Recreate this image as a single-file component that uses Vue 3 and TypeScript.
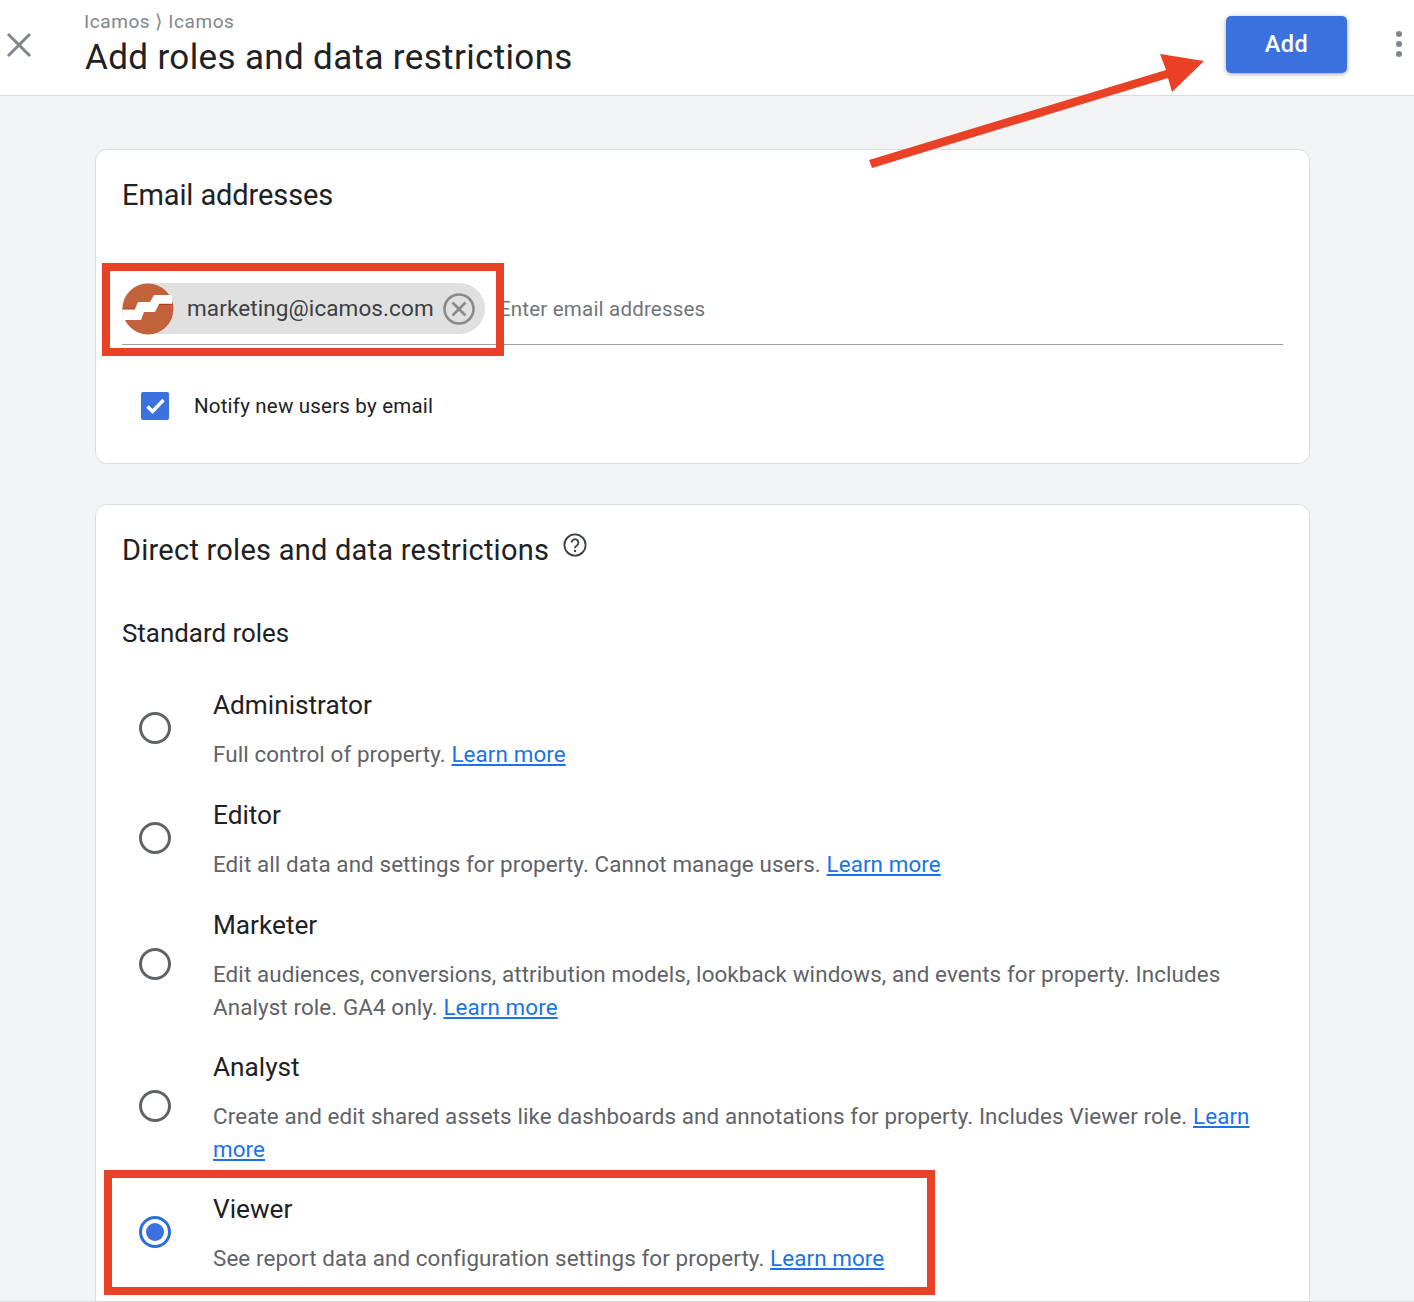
<script setup lang="ts">
interface Role {
  name: string
  desc: string
  selected?: boolean
}

const roles: Role[] = [
  { name: 'Administrator', desc: 'Full control of property.' },
  { name: 'Editor', desc: 'Edit all data and settings for property. Cannot manage users.' },
  { name: 'Marketer', desc: 'Edit audiences, conversions, attribution models, lookback windows, and events for property. Includes Analyst role. GA4 only.' },
  { name: 'Analyst', desc: 'Create and edit shared assets like dashboards and annotations for property. Includes Viewer role.' },
  { name: 'Viewer', desc: 'See report data and configuration settings for property.', selected: true },
]
</script>

<template>
  <div class="page">
    <header class="topbar">
      <button class="close" aria-label="Close">
        <svg width="26" height="26" viewBox="0 0 26 26"><path d="M2 2 L24 24 M24 2 L2 24" stroke="#80868b" stroke-width="3" fill="none" /></svg>
      </button>
      <div class="heading">
        <div class="crumb">Icamos ⟩ Icamos</div>
        <h1 class="title">Add roles and data restrictions</h1>
      </div>
      <button class="add">Add</button>
      <div class="more"><i></i><i></i><i></i></div>
    </header>

    <main class="content">
      <section class="card email-card">
        <h2 class="card-title email-title">Email addresses</h2>
        <div class="input-line">
          <div class="chip">
            <svg class="avatar" viewBox="0 0 52 52" width="52" height="52">
              <circle cx="26" cy="26" r="25.5" fill="#c1623a" />
              <path d="M0 26 H13 L16 19 H28 L32 12 H50 V21 H37 L33 29 H22 L19 37 H2 Z" fill="#fff" />
              <path d="M0.5 26 H13" stroke="#b5360f" stroke-width="1" fill="none" />
              <path d="M37 21.3 H51" stroke="#b5360f" stroke-width="1" fill="none" />
            </svg>
            <span class="chip-text">marketing@icamos.com</span>
            <svg class="chip-x" viewBox="0 0 32 32" width="32" height="32">
              <circle cx="16" cy="16" r="14.5" fill="none" stroke="#8a8a8a" stroke-width="2.6" />
              <path d="M9.5 9.5 L22.5 22.5 M22.5 9.5 L9.5 22.5" stroke="#8a8a8a" stroke-width="2.6" />
            </svg>
          </div>
          <span class="placeholder">Enter email addresses</span>
        </div>
        <label class="notify">
          <span class="checkbox">
            <svg viewBox="0 0 28 28" width="28" height="28"><path d="M6.5 14.5 L11.5 19.5 L22.5 8" stroke="#fff" stroke-width="3.4" fill="none" /></svg>
          </span>
          <span>Notify new users by email</span>
        </label>
      </section>

      <section class="card roles-card">
        <div class="roles-head">
          <h2 class="card-title direct-title">Direct roles and data restrictions</h2>
          <svg class="help" viewBox="0 0 24 24" width="24" height="24">
            <circle cx="12" cy="12" r="10.6" fill="none" stroke="#3c4043" stroke-width="1.8" />
            <path d="M8.6 9.6 A3.4 3.4 0 1 1 13.8 12.5 C12.6 13.2 12 13.8 12 15.2" fill="none" stroke="#3c4043" stroke-width="1.8" />
            <circle cx="12" cy="18" r="1.2" fill="#3c4043" />
          </svg>
        </div>
        <h3 class="subhead">Standard roles</h3>
        <div v-for="role in roles" :key="role.name" class="role">
          <span class="radio" :class="{ on: role.selected }"></span>
          <div class="role-body">
            <div class="role-name">{{ role.name }}</div>
            <p class="role-desc">{{ role.desc }} <a class="link" href="#">Learn more</a></p>
          </div>
        </div>
      </section>
    </main>

    <div class="mark mark-chip"></div>
    <div class="mark mark-viewer"></div>
    <svg class="arrow" width="1414" height="200" viewBox="0 0 1414 200">
      <path d="M869 160 L1166 70 L1160 54 L1204 61 L1172 92 L1168 78 L872 168 Z" fill="#ea4025" />
    </svg>
  </div>
</template>

<style>
html, body { margin: 0; height: 1302px; overflow: hidden; }
</style>

<style scoped>
.page {
  position: relative;
  box-sizing: border-box;
  width: 1414px;
  height: 1302px;
  overflow: hidden;
  background: #f1f3f4;
  border-bottom: 1px solid #dadce0;
  font-family: Roboto, "Liberation Sans", sans-serif;
  color: #202124;
}
.topbar {
  height: 95px;
  display: flex;
  align-items: center;
  background: #fff;
  border-bottom: 1.5px solid #dadce0;
  box-sizing: content-box;
}
.close {
  width: 84px;
  height: 88px;
  margin-top: -6px;
  padding: 0 0 0 6px;
  display: flex;
  align-items: center;
  border: 0;
  background: none;
}
.heading { flex: 1; align-self: flex-start; padding-top: 10px; }
.crumb { font-size: 19px; line-height: 24px; color: #80868b; letter-spacing: 0.57px; }
.title { margin: 2px 0 0 1px; font-size: 35px; line-height: 44px; font-weight: 400; letter-spacing: 0.36px; }
.add {
  width: 121px;
  height: 57px;
  margin-top: -7px;
  padding-bottom: 2px;
  border: 0;
  border-radius: 5px;
  background: #3b71de;
  color: #fff;
  font: 500 23.5px Roboto, sans-serif;
  letter-spacing: 0.4px;
  box-shadow: 0 1px 4px rgba(60, 64, 67, 0.5);
}
.more {
  width: 67px;
  margin-top: -7px;
  display: flex;
  flex-direction: column;
  align-items: flex-end;
  gap: 4px;
  padding-right: 12px;
  box-sizing: border-box;
}
.more i { width: 6px; height: 6px; border-radius: 50%; background: #80868b; }
.content {
  width: 1215px;
  margin-left: 95px;
  padding-top: 53px;
  display: flex;
  flex-direction: column;
  gap: 40px;
}
.card {
  box-sizing: border-box;
  background: #fff;
  border: 1.5px solid #dadce0;
  border-radius: 12px;
  padding: 0 26px;
}
.email-card { height: 315px; padding-top: 27px; }
.card-title { margin: 0; font-size: 29px; line-height: 36px; font-weight: 400; }
.email-title { letter-spacing: -0.1px; }
.direct-title { letter-spacing: 0.24px; }
.input-line {
  margin: 70px 0 0;
  width: 1161px;
  height: 62px;
  display: flex;
  align-items: flex-start;
  border-bottom: 1.5px solid #9aa0a6;
  box-sizing: border-box;
}
.chip {
  width: 363px;
  height: 51px;
  flex: none;
  display: flex;
  align-items: center;
  background: #e0e0e0;
  border-radius: 26px;
}
.avatar { flex: none; }
.chip-text { margin-left: 13px; padding-bottom: 2px; font-size: 22.5px; color: #3c4043; letter-spacing: 0.1px; }
.chip-x { margin-left: 9px; flex: none; }
.placeholder { margin: 1px 0 0 14px; line-height: 51px; font-size: 20.5px; color: #70757a; letter-spacing: 0.2px; }
.notify {
  margin: 45px 0 0 19px;
  display: flex;
  align-items: center;
  gap: 25px;
  font-size: 20.5px;
  line-height: 32px;
  letter-spacing: 0.2px;
}
.checkbox {
  width: 28px;
  height: 28px;
  background: #3b71de;
  border-radius: 2px;
  display: block;
}
.checkbox svg { display: block; }
.roles-card { height: 820px; padding-top: 27px; }
.roles-head { display: flex; align-items: flex-start; gap: 14px; }
.help { margin-top: 1px; }
.subhead { margin: 48px 0 0; font-size: 25.9px; line-height: 34px; font-weight: 400; }
.subhead + .role { margin-top: 23px; }
.role { display: flex; align-items: center; min-height: 110px; }
.radio {
  box-sizing: border-box;
  width: 32px;
  height: 32px;
  margin-left: 17px;
  flex: none;
  border-radius: 50%;
  border: 3px solid #5f6368;
  position: relative;
}
.radio.on { border-color: #2a6fdb; }
.radio.on::after {
  content: "";
  position: absolute;
  inset: 4px;
  border-radius: 50%;
  background: #3b71de;
}
.role-body { margin-left: 42px; padding: 16px 0 11px; flex: 1; align-self: flex-start; }
.role-name { font-size: 26.2px; line-height: 32px; }
.role-desc {
  margin: 17px 0 0;
  font-size: 22.4px;
  line-height: 33px;
  color: #5f6368;
  letter-spacing: 0.1px;
}
.link { color: #1a73e8; text-decoration: underline; }
.mark { position: absolute; box-sizing: border-box; border: 8px solid #ea4025; }
.mark-chip { left: 102px; top: 263px; width: 402px; height: 93px; }
.mark-viewer { left: 104px; top: 1170px; width: 831px; height: 125px; }
.arrow { position: absolute; left: 0; top: 0; pointer-events: none; }
</style>
